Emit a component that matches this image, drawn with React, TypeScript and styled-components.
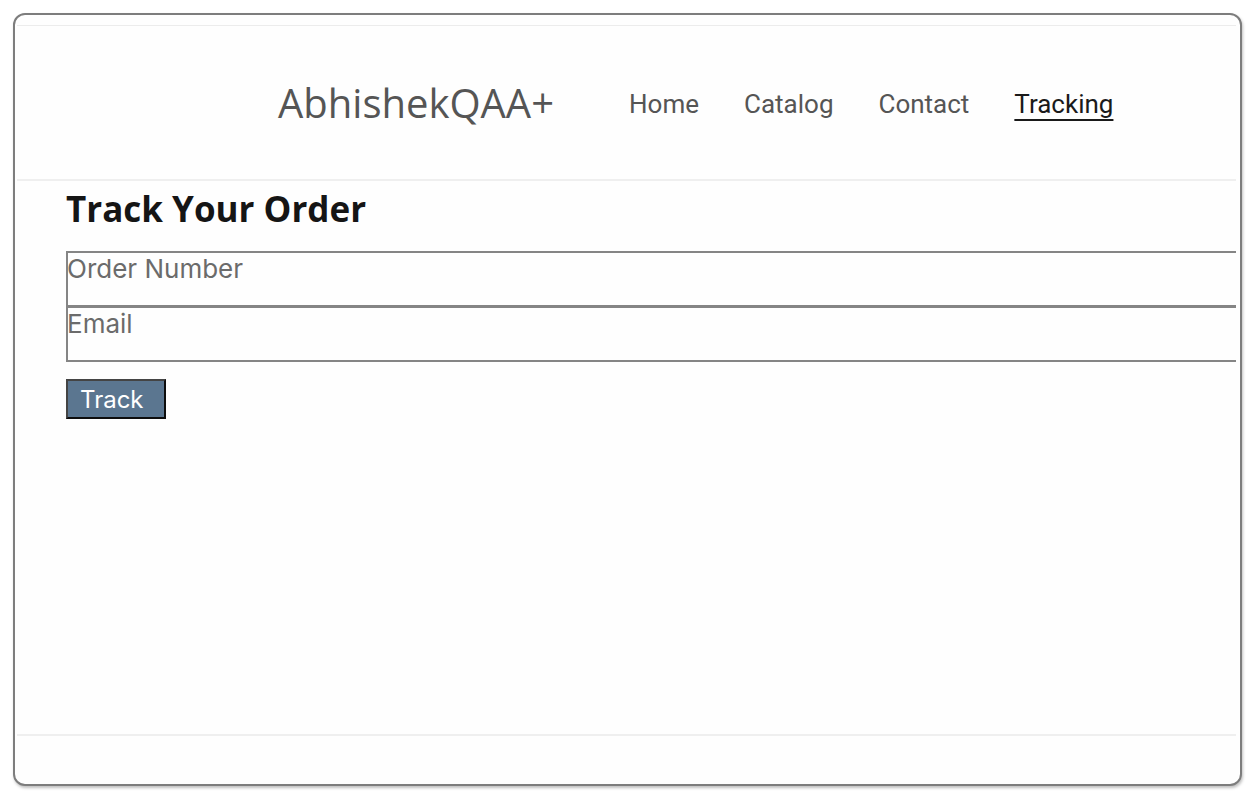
import React from "react";
import styled, { createGlobalStyle } from "styled-components";

const Global = createGlobalStyle`
  html, body { margin: 0; padding: 0; background: #ffffff; }
  body { font-family: "Inter", "Liberation Sans", sans-serif; }
  * { box-sizing: border-box; }
`;

const Page = styled.div`
  width: 1259px;
  height: 800px;
  padding: 13px 17px 14px 13px;
`;

const Frame = styled.div`
  height: 773px;
  border: 2px solid #7d7d7d;
  border-radius: 12px;
  box-shadow: 1px 2px 3px rgba(0, 0, 0, 0.25);
  background: #fefefe;
  overflow: hidden;
  padding: 10px 4px 0 2px;
  display: flex;
  flex-direction: column;
`;

const Screen = styled.div`
  flex: 1;
  border-top: 1px solid #ececec;
  display: flex;
  flex-direction: column;
  overflow: hidden;
`;

const Header = styled.header`
  height: 155px;
  border-bottom: 2px solid #efefef;
  display: flex;
  align-items: center;
  padding: 0 0 0 261px;
`;

const Logo = styled.div`
  font-family: "Open Sans", "Noto Sans", sans-serif;
  font-size: 40px;
  color: #555555;
  margin-right: 75px;
`;

const Nav = styled.nav`
  display: flex;
  gap: 45px;
  margin-top: 2px;
`;

const NavLink = styled.a<{ $active?: boolean }>`
  font-family: "Roboto", "Liberation Sans", sans-serif;
  font-size: 26px;
  color: ${(p) => (p.$active ? "#1a1a1a" : "#555555")};
  text-decoration: ${(p) => (p.$active ? "underline" : "none")};
  text-underline-offset: 6px;
  text-decoration-thickness: 2px;
`;

const Main = styled.main`
  flex: 1;
  padding: 6px 0 0 49px;
`;

const Title = styled.h1`
  font-family: "Open Sans", "Noto Sans", sans-serif;
  font-weight: 700;
  font-size: 35px;
  color: #151515;
  margin: 0 0 20px 0;
  line-height: 44px;
`;

const Form = styled.form`
  display: flex;
  flex-direction: column;
  align-items: flex-start;
`;

const Field = styled.input`
  width: 1300px;
  height: 56px;
  border: 2px solid #858585;
  margin: 0 0 -1px 0;
  padding: 0 0 22px 0;
  text-indent: -1px;
  font-family: "Inter", "Liberation Sans", sans-serif;
  font-size: 26px;
  background: #fefefe;
  outline: none;
  &::placeholder { color: #6b6b6b; }
`;

const Button = styled.button`
  margin-top: 18px;
  width: 100px;
  height: 40px;
  background: #5b7690;
  border: 2px solid;
  border-color: #444 #0d0d0d #0d0d0d #444;
  color: #ffffff;
  font-family: "Inter", "Liberation Sans", sans-serif;
  font-size: 24px;
  text-align: left;
  padding: 0 0 0 12px;
`;

const Footer = styled.footer`
  height: 50px;
  border-top: 2px solid #efefef;
`;

export default function App() {
  return (
    <>
      <Global />
      <Page>
        <Frame>
          <Screen>
            <Header>
              <Logo>AbhishekQAA+</Logo>
              <Nav>
                <NavLink>Home</NavLink>
                <NavLink>Catalog</NavLink>
                <NavLink>Contact</NavLink>
                <NavLink $active>Tracking</NavLink>
              </Nav>
            </Header>
            <Main>
              <Title>Track Your Order</Title>
              <Form onSubmit={(e) => e.preventDefault()}>
                <Field placeholder="Order Number" />
                <Field placeholder="Email" />
                <Button type="submit">Track</Button>
              </Form>
            </Main>
            <Footer />
          </Screen>
        </Frame>
      </Page>
    </>
  );
}
